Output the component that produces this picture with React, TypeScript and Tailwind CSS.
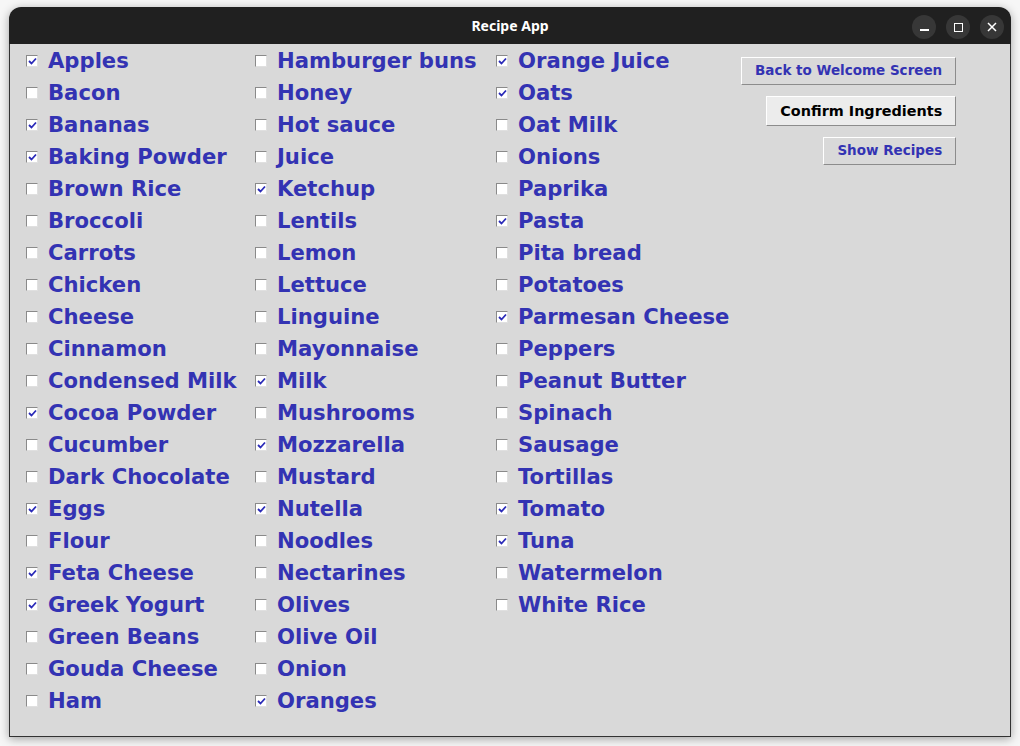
import React from "react";

const columns: [string, boolean][][] = [
  [
    ["Apples", true],
    ["Bacon", false],
    ["Bananas", true],
    ["Baking Powder", true],
    ["Brown Rice", false],
    ["Broccoli", false],
    ["Carrots", false],
    ["Chicken", false],
    ["Cheese", false],
    ["Cinnamon", false],
    ["Condensed Milk", false],
    ["Cocoa Powder", true],
    ["Cucumber", false],
    ["Dark Chocolate", false],
    ["Eggs", true],
    ["Flour", false],
    ["Feta Cheese", true],
    ["Greek Yogurt", true],
    ["Green Beans", false],
    ["Gouda Cheese", false],
    ["Ham", false],
  ],
  [
    ["Hamburger buns", false],
    ["Honey", false],
    ["Hot sauce", false],
    ["Juice", false],
    ["Ketchup", true],
    ["Lentils", false],
    ["Lemon", false],
    ["Lettuce", false],
    ["Linguine", false],
    ["Mayonnaise", false],
    ["Milk", true],
    ["Mushrooms", false],
    ["Mozzarella", true],
    ["Mustard", false],
    ["Nutella", true],
    ["Noodles", false],
    ["Nectarines", false],
    ["Olives", false],
    ["Olive Oil", false],
    ["Onion", false],
    ["Oranges", true],
  ],
  [
    ["Orange Juice", true],
    ["Oats", true],
    ["Oat Milk", false],
    ["Onions", false],
    ["Paprika", false],
    ["Pasta", true],
    ["Pita bread", false],
    ["Potatoes", false],
    ["Parmesan Cheese", true],
    ["Peppers", false],
    ["Peanut Butter", false],
    ["Spinach", false],
    ["Sausage", false],
    ["Tortillas", false],
    ["Tomato", true],
    ["Tuna", true],
    ["Watermelon", false],
    ["White Rice", false],
  ],
];

const colWidths = ["w-[229px]", "w-[241px]", "w-[245px]"];

function Box({ checked }: { checked: boolean }) {
  return (
    <span className="w-[12px] h-[12px] shrink-0 bg-white border-t border-l border-[#8a8a8a] border-r border-b border-r-[#e0e0e0] border-b-[#e0e0e0] flex items-center justify-center">
      {checked && (
        <svg width="9" height="8" viewBox="0 0 9 8">
          <path d="M1 4 L3.5 6.5 L8 1.5" fill="none" stroke="#2a2ab8" strokeWidth="1.8" />
        </svg>
      )}
    </span>
  );
}

function Item({ label, checked }: { label: string; checked: boolean }) {
  return (
    <div className="h-[32px] flex items-center gap-[10px]">
      <Box checked={checked} />
      <span className="text-[21.15px] font-bold text-[#3333b3] leading-none whitespace-nowrap">{label}</span>
    </div>
  );
}

function Btn({ children, primary }: { children: React.ReactNode; primary?: boolean }) {
  return (
    <div
      className={
        "px-[13px] whitespace-nowrap border border-t-white border-l-white border-r-[#8c8c8c] border-b-[#8c8c8c] font-bold leading-none flex items-center " +
        (primary ? "h-[30px] bg-[#ececec] text-black text-[14.4px]" : "h-[28px] bg-[#d9d9d9] text-[#3333b3] text-[13.5px]")
      }
    >
      {children}
    </div>
  );
}

export default function App() {
  return (
    <div className="w-[1020px] h-[746px] bg-[#f6f6f6] pt-[7px] pl-[9px]" style={{ fontFamily: '"DejaVu Sans", sans-serif' }}>
      <div className="w-[1002px] h-[730px] flex flex-col rounded-t-[12px] overflow-hidden shadow-[0_2px_10px_rgba(0,0,0,0.35)]">
        {/* title bar */}
        <div className="h-[37px] bg-[#202020] flex items-center relative shrink-0">
          <div className="flex-1 text-center text-white text-[14px] font-bold" style={{ fontFamily: '"Noto Sans", sans-serif' }}>
            Recipe App
          </div>
          <div className="absolute right-[7px] top-[8px] flex gap-[10px]">
            <div className="w-[24px] h-[24px] rounded-full bg-[#373737] flex items-center justify-center">
              <div className="w-[9px] h-[1.5px] bg-white mt-[6px]" />
            </div>
            <div className="w-[24px] h-[24px] rounded-full bg-[#373737] flex items-center justify-center">
              <div className="w-[9px] h-[9px] border-[1.5px] border-white" />
            </div>
            <div className="w-[24px] h-[24px] rounded-full bg-[#373737] flex items-center justify-center">
              <svg width="10" height="10" viewBox="0 0 10 10">
                <path d="M1 1 L9 9 M9 1 L1 9" stroke="white" strokeWidth="1.5" />
              </svg>
            </div>
          </div>
        </div>
        {/* body */}
        <div className="flex-1 bg-[#d9d9d9] border-x border-b border-[#333] flex pl-[16px] pt-[1px]">
          {columns.map((col, i) => (
            <div key={i} className={"flex flex-col shrink-0 min-w-0 " + colWidths[i]}>
              {col.map(([label, checked]) => (
                <Item key={label} label={label} checked={checked} />
              ))}
            </div>
          ))}
          <div className="flex-1 flex flex-col items-end pr-[56px] pt-[12px] gap-[11px]">
            <Btn>Back to Welcome Screen</Btn>
            <Btn primary>Confirm Ingredients</Btn>
            <Btn>Show Recipes</Btn>
          </div>
        </div>
      </div>
    </div>
  );
}
